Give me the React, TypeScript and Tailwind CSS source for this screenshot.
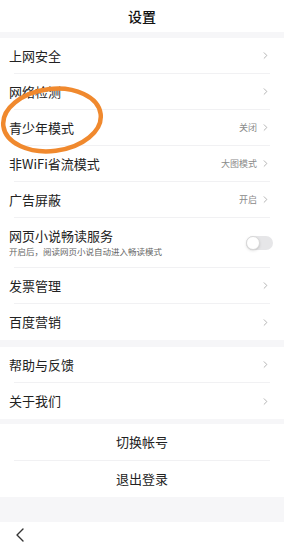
import { ChevronRight } from 'lucide-react';

type Row = { label: string; value?: string };

const group1: Row[] = [
  { label: '上网安全' },
  { label: '网络检测' },
  { label: '青少年模式', value: '关闭' },
  { label: '非WiFi省流模式', value: '大图模式' },
  { label: '广告屏蔽', value: '开启' },
];

const group2: Row[] = [{ label: '发票管理' }, { label: '百度营销' }];
const group3: Row[] = [{ label: '帮助与反馈' }, { label: '关于我们' }];

const Divider = () => <div className="mx-[14px] h-px bg-[#f1f1f3]" />;

const SettingRow = ({ label, value, h = 'h-[35px]' }: Row & { h?: string }) => (
  <div className={`flex ${h} items-center justify-between pl-[9px] pr-[13px]`}>
    <span className="text-[13px] text-[#222]">{label}</span>
    <div className="flex items-center gap-[3px]">
      {value && <span className="text-[9px] text-[#8a8a8a]">{value}</span>}
      <ChevronRight size={11} strokeWidth={1.6} className="text-[#9a9a9a]" />
    </div>
  </div>
);

const App = () => {
  return (
    <div
      className="relative flex h-[547px] w-[284px] flex-col overflow-hidden bg-[#f6f6f8]"
      style={{ fontFamily: '"Noto Sans CJK SC", "Noto Sans", sans-serif' }}
    >
      <header className="flex h-[32px] items-center justify-center bg-white">
        <span className="text-[14px] font-medium text-[#111]">设置</span>
      </header>

      <div className="mt-[6px] bg-white">
        {group1.map((r) => (
          <div key={r.label}>
            <SettingRow {...r} />
            <Divider />
          </div>
        ))}
        <div className="flex h-[49px] items-center justify-between pl-[9px] pr-[11px]">
          <div className="flex flex-col">
            <span className="text-[13px] leading-[18px] text-[#222]">网页小说畅读服务</span>
            <span className="text-[8.5px] leading-[13px] text-[#666]">
              开启后，阅读网页小说自动进入畅读模式
            </span>
          </div>
          <div className="relative h-[14px] w-[27px] rounded-full bg-[#e6e6e8]">
            <div className="absolute left-0 top-0 h-[14px] w-[14px] rounded-full border border-[#d8d8d8] bg-white shadow-sm" />
          </div>
        </div>
        <Divider />
        <SettingRow {...group2[0]} />
        <Divider />
        <SettingRow {...group2[1]} h="h-[36px]" />
      </div>

      <div className="mt-[7px] bg-white">
        <SettingRow {...group3[0]} />
        <Divider />
        <SettingRow {...group3[1]} h="h-[36px]" />
      </div>

      <div className="mt-[5px] bg-white">
        <div className="flex h-[36px] items-center justify-center text-[13px] text-[#222]">切换帐号</div>
        <Divider />
        <div className="flex h-[36px] items-center justify-center text-[13px] text-[#222]">退出登录</div>
      </div>

      <div className="mt-[25px] flex flex-1 items-center bg-white pl-[14px]">
        <svg width="12" height="16" viewBox="0 0 12 16" fill="none">
          <path d="M9 2 L3 8 L9 14" stroke="#333" strokeWidth="1.4" strokeLinecap="round" strokeLinejoin="round" />
        </svg>
      </div>

      <svg className="pointer-events-none absolute left-0 top-0" width="284" height="547">
        <ellipse
          cx="52"
          cy="120"
          rx="49"
          ry="31"
          transform="rotate(-7 52 120)"
          fill="none"
          stroke="#f0892e"
          strokeWidth="4.5"
        />
      </svg>
    </div>
  );
};

export default App;
